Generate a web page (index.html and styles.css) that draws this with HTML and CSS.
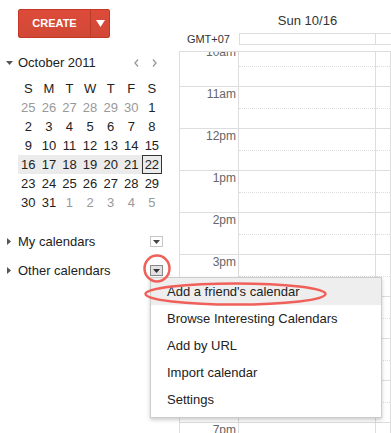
FILE: index.html
```html
<!DOCTYPE html>
<html lang="en">
<head>
  <meta charset="UTF-8"/>
  <meta name="viewport" content="width=device-width,initial-scale=1"/>
  <title>Calendar</title>
  <link rel="stylesheet" href="styles.css">
</head>
<body>
  <div class="app">
    <aside class="side">
      <div class="create">
        <span class="create-main">CREATE</span>
        <span class="create-drop">
          <svg width="9" height="7" viewBox="0 0 9 7"><polygon points="0,0 9,0 4.5,7" fill="#fff"/></svg>
        </span>
      </div>

      <div class="mc-head">
        <svg class="mc-toggle" width="7" height="4" viewBox="0 0 7 4"><polygon points="0,0 7,0 3.5,4" fill="#555"/></svg>
        <span class="mc-title">October 2011</span>
        <span class="mc-nav">
          <svg width="5" height="8" viewBox="0 0 5 8"><polyline points="4,0.5 1,4 4,7.5" fill="none" stroke="#999" stroke-width="1.3"/></svg>
          <svg width="5" height="8" viewBox="0 0 5 8"><polyline points="1,0.5 4,4 1,7.5" fill="none" stroke="#999" stroke-width="1.3"/></svg>
        </span>
      </div>

      <div class="mc-grid">
        <span>S</span><span>M</span><span>T</span><span>W</span><span>T</span><span>F</span><span>S</span>
        <span class="off">25</span><span class="off">26</span><span class="off">27</span><span class="off">28</span><span class="off">29</span><span class="off">30</span><span>1</span>
        <span>2</span><span>3</span><span>4</span><span>5</span><span>6</span><span>7</span><span>8</span>
        <span>9</span><span>10</span><span>11</span><span>12</span><span>13</span><span>14</span><span>15</span>
        <span class="wk">16</span><span class="wk">17</span><span class="wk">18</span><span class="wk">19</span><span class="wk">20</span><span class="wk">21</span><span class="wk today">22</span>
        <span>23</span><span>24</span><span>25</span><span>26</span><span>27</span><span>28</span><span>29</span>
        <span>30</span><span>31</span><span class="off">1</span><span class="off">2</span><span class="off">3</span><span class="off">4</span><span class="off">5</span>
      </div>

      <ul class="cal-list">
        <li>
          <svg width="4" height="7" viewBox="0 0 4 7"><polygon points="0,0 4,3.5 0,7" fill="#555"/></svg>
          <span class="cal-name">My calendars</span>
          <span class="dd"><svg width="7" height="4" viewBox="0 0 7 4"><polygon points="0,0 7,0 3.5,4" fill="#444"/></svg></span>
        </li>
        <li>
          <svg width="4" height="7" viewBox="0 0 4 7"><polygon points="0,0 4,3.5 0,7" fill="#555"/></svg>
          <span class="cal-name">Other calendars</span>
          <span class="dd active"><svg width="7" height="4" viewBox="0 0 7 4"><polygon points="0,0 7,0 3.5,4" fill="#333"/></svg></span>
        </li>
      </ul>
    </aside>

    <main class="main">
      <div class="head">
        <div></div>
        <div class="day-title">Sun 10/16</div>
        <div></div>
        <div class="tz">GMT+07</div>
        <div class="allday"><div class="ad-cell"></div><div></div></div>
      </div>

      <div class="grid">
        <div class="hours">
          <div class="hour"><div class="tl">10am</div><div class="slot"></div><div class="slot"></div></div>
          <div class="hour"><div class="tl">11am</div><div class="slot"></div><div class="slot"></div></div>
          <div class="hour"><div class="tl">12pm</div><div class="slot"></div><div class="slot"></div></div>
          <div class="hour"><div class="tl">1pm</div><div class="slot"></div><div class="slot"></div></div>
          <div class="hour"><div class="tl">2pm</div><div class="slot"></div><div class="slot"></div></div>
          <div class="hour"><div class="tl">3pm</div><div class="slot"></div><div class="slot"></div></div>
          <div class="hour"><div class="tl">4pm</div><div class="slot"></div><div class="slot"></div></div>
          <div class="hour"><div class="tl">5pm</div><div class="slot"></div><div class="slot"></div></div>
          <div class="hour"><div class="tl">6pm</div><div class="slot"></div><div class="slot"></div></div>
          <div class="hour"><div class="tl">7pm</div><div class="slot"></div><div class="slot"></div></div>
        </div>
      </div>
    </main>
  </div>

  <!-- dropdown opened from "Other calendars" -->
  <ul class="menu">
    <li class="hover">Add a friend's calendar</li>
    <li>Browse Interesting Calendars</li>
    <li>Add by URL</li>
    <li>Import calendar</li>
    <li>Settings</li>
  </ul>

  <!-- red hand-drawn marks -->
  <svg class="marks" width="391" height="433" viewBox="0 0 391 433">
    <ellipse cx="157" cy="268.5" rx="12.5" ry="13" fill="none" stroke="#f0605a" stroke-width="2.5"/>
    <ellipse cx="235.5" cy="294" rx="90" ry="10.5" fill="none" stroke="#f0605a" stroke-width="2.5"/>
  </svg>
</body>
</html>
```

FILE: styles.css
```css
:root {
  --line: #ddd;
  --text: #222;
  --muted: #999;
  --red: #d14836;
}
* { box-sizing: border-box; margin: 0; padding: 0 }
body {
  position: relative;
  width: 391px;
  height: 433px;
  overflow: hidden;
  background: #fff;
  font-family: "Liberation Sans", Arial, sans-serif;
  color: var(--text);
}
ul { list-style: none }

.app {
  display: grid;
  grid-template-columns: 179px 1fr;
  height: 433px;
  overflow: hidden;
}

/* sidebar */
.create {
  display: flex;
  width: 92px;
  height: 29px;
  margin: 9px 0 0 18px;
  background: linear-gradient(#dd4b39, #d14836);
  border: 1px solid #c53727;
  border-radius: 2px;
  color: #fff;
}
.create-main {
  width: 71px;
  font-size: 11px;
  font-weight: bold;
  line-height: 27px;
  text-align: center;
}
.create-drop {
  flex: 1;
  display: flex;
  align-items: center;
  justify-content: center;
  border-left: 1px solid #b93a2a;
}

.mc-head {
  display: flex;
  align-items: center;
  height: 16px;
  margin: 17px 0 8px;
  padding-left: 6px;
}
.mc-toggle { margin-right: 5px }
.mc-title { font-size: 13px; line-height: 16px }
.mc-nav {
  display: flex;
  gap: 13px;
  margin-left: auto;
  margin-right: 22px;
}

.mc-grid {
  display: grid;
  grid-template-columns: repeat(7, 20.6px);
  grid-auto-rows: 19px;
  margin-left: 18px;
  font-size: 13px;
  line-height: 19px;
  text-align: center;
}
.mc-grid .off { color: var(--muted) }
.mc-grid .wk { background: #ebebeb }
.mc-grid .today {
  border: 1px solid #333;
  line-height: 17px;
}

.cal-list { margin-top: 15px }
.cal-list li {
  display: flex;
  align-items: center;
  height: 29px;
  padding-left: 7px;
  font-size: 13px;
}
.cal-name { margin-left: 7px }
.dd {
  display: flex;
  align-items: center;
  justify-content: center;
  width: 13px;
  height: 11px;
  margin: 0 16px 0 auto;
  border: 1px solid #c6c6c6;
  background: #fff;
}
.dd.active {
  border-color: #888;
  background: #e2e2e2;
}

/* main */
.main {
  display: flex;
  flex-direction: column;
  min-width: 0;
  min-height: 0;
}
.head {
  display: grid;
  grid-template-columns: 60px 137px 1fr;
  margin-bottom: 6px;
}
.day-title {
  height: 33px;
  padding-top: 13px;
  font-size: 13px;
  line-height: 15px;
  text-align: center;
  color: #333;
}
.tz {
  padding-right: 9px;
  font-size: 11px;
  line-height: 12px;
  text-align: right;
  color: #333;
}
.allday {
  grid-column: 2 / 4;
  display: grid;
  grid-template-columns: 136px 1fr;
  height: 12px;
  border: 1px solid var(--line);
  border-right: none;
}
.ad-cell { border-right: 1px solid var(--line) }

.grid {
  flex: 1;
  min-height: 0;
  overflow: hidden;
  border-top: 1px solid var(--line);
  border-left: 1px solid var(--line);
}
.hours { margin-top: -8px }
.hour {
  display: grid;
  grid-template-columns: 59px 137px 1fr;
  height: 42px;
  border-top: 1px solid var(--line);
}
.tl {
  padding-right: 2px;
  border-right: 1px solid var(--line);
  font-size: 12px;
  line-height: 14px;
  text-align: right;
  color: #666;
}
.slot { border-right: 1px solid var(--line) }
.slot::before {
  content: "";
  display: block;
  height: 21px;
  border-bottom: 1px dotted var(--line);
}

/* popup menu */
.menu {
  position: absolute;
  left: 150px;
  top: 277px;
  width: 232px;
  padding-bottom: 4px;
  background: #fff;
  border: 1px solid rgba(0,0,0,0.2);
  box-shadow: 0 2px 4px rgba(0,0,0,0.2);
  font-size: 13px;
}
.menu li {
  height: 27px;
  padding-left: 16px;
  line-height: 27px;
  color: var(--text);
}
.menu li.hover { background: #eee }

.marks {
  position: absolute;
  left: 0;
  top: 0;
  pointer-events: none;
}
```
